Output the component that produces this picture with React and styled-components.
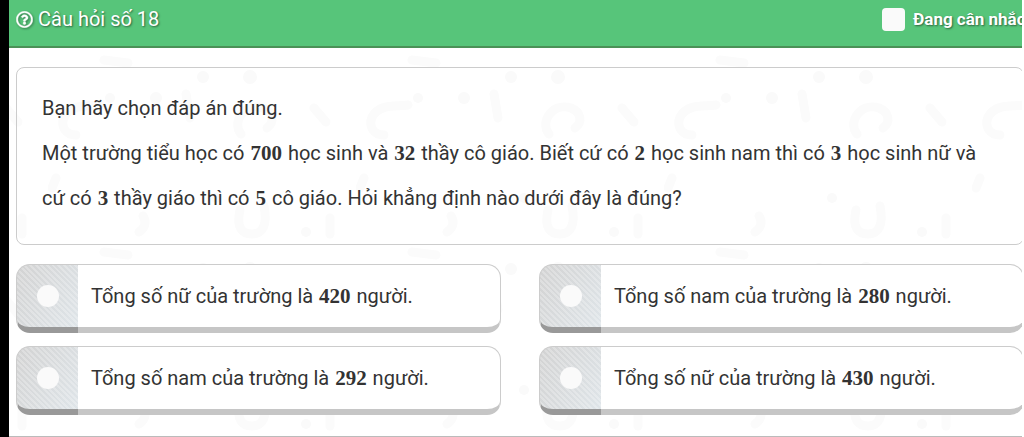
import React, { useState } from 'react'
import styled, { createGlobalStyle } from 'styled-components'
import { FaRegQuestionCircle } from 'react-icons/fa'

const answers = [
  { id: 'a', before: 'Tổng số nữ của trường là', value: 420 },
  { id: 'b', before: 'Tổng số nam của trường là', value: 280 },
  { id: 'c', before: 'Tổng số nam của trường là', value: 292 },
  { id: 'd', before: 'Tổng số nữ của trường là', value: 430 },
]

// faint question marks and commas behind the page
const Doodles = () => (
  <Backdrop aria-hidden="true">
    <defs>
      <pattern id="doodles" x="39" y="4" width="308" height="192" patternUnits="userSpaceOnUse">
        <g fill="none" stroke="#fbfbfb" strokeWidth="9" strokeLinecap="round">
          <path d="M52 53c-12 2-28-2-36 12-4 10 2 18 12 18" />
          <path d="M138 42l4 24" />
          <path d="M193 82c-10-12 4-32 22-26 10 4 12 14 4 20" />
          <path d="M266 56l12 14" />
          <path d="M192 158c-4 18 2 24 12 24s16-8 12-28" />
          <path d="M95 164c4 6 2 12-4 16" />
          <path d="M282 166v16" />
          <path d="M56 8l24 3" />
          <path d="M8 126l-4 10" />
        </g>
        <g fill="#fafafa">
          <circle cx="155" cy="25" r="6" />
          <circle cx="202" cy="25" r="7" />
          <circle cx="62" cy="46" r="5" />
          <circle cx="108" cy="46" r="6" />
          <circle cx="258" cy="180" r="5" />
          <circle cx="168" cy="146" r="5" />
        </g>
      </pattern>
    </defs>
    <rect width="100%" height="100%" fill="url(#doodles)" />
  </Backdrop>
)

const App = () => {
  const [picked, setPicked] = useState('')

  return (
    <>
      <GlobalStyle />
      <Page>
        <Header>
          <Title>
            <FaRegQuestionCircle />
            Câu hỏi số 18
          </Title>
          <Consider>
            <CheckBox type="checkbox" name="consider" />
            Đang cân nhắc
          </Consider>
        </Header>

        <Content>
          <Doodles />
          <Question>
            <p>Bạn hãy chọn đáp án đúng.</p>
            <p>
              Một trường tiểu học có <Num>700</Num> học sinh và <Num>32</Num> thầy cô giáo. Biết cứ có <Num>2</Num> học sinh nam thì có <Num>3</Num> học sinh nữ và cứ có <Num>3</Num> thầy giáo thì có <Num>5</Num> cô giáo. Hỏi khẳng định nào dưới đây là đúng?
            </p>
          </Question>

          <Answers>
            {answers.map((answer) => (
              <Answer key={answer.id}>
                <Picker>
                  <Radio
                    type="radio"
                    name="answer"
                    value={answer.id}
                    checked={picked === answer.id}
                    onChange={() => setPicked(answer.id)}
                  />
                </Picker>
                <AnswerText>
                  <span>{answer.before} <Num>{answer.value}</Num> người.</span>
                </AnswerText>
              </Answer>
            ))}
          </Answers>
        </Content>
      </Page>
    </>
  )
}

const GlobalStyle = createGlobalStyle`
  * {
    box-sizing: border-box;
  }
  body {
    margin: 0;
    background: #fff;
    color: #333;
    font-family: Roboto, "Liberation Sans", sans-serif;
    font-size: 20px;
  }
  p {
    margin: 0;
  }
`

const Page = styled.main`
  border-left: 9px solid #000;
  border-right: 2px solid #fff;
  overflow: hidden;
`

const Header = styled.header`
  display: flex;
  justify-content: space-between;
  height: 48px;
  padding: 7px 0 0 7px;
  background: #57c57a;
  border-bottom: 2px solid #4b9157;
  color: #fff;
  text-shadow: 1px 1px 2px rgba(0, 0, 0, 0.5);
  white-space: nowrap;
`

const Title = styled.h1`
  display: flex;
  align-items: center;
  gap: 5px;
  height: 24px;
  margin: 0;
  font-size: 20px;
  font-weight: 400;
  svg {
    width: 17px;
    height: 17px;
    stroke: #fff;
    stroke-width: 12px;
    filter: drop-shadow(1px 1px 1px rgba(0, 0, 0, 0.4));
  }
`

const Consider = styled.label`
  display: flex;
  align-items: center;
  gap: 8px;
  width: 140px;
  height: 24px;
  font-size: 17px;
  font-weight: 700;
`

const CheckBox = styled.input`
  appearance: none;
  flex: none;
  width: 23px;
  height: 23px;
  margin: 0;
  border-radius: 4px;
  background: #fafafa;
  &:checked {
    box-shadow: inset 0 0 0 6px #fafafa;
    background: #4b9157;
  }
`

const Content = styled.section`
  position: relative;
  margin-right: -2px;
  padding: 19px 0 21px 7px;
  border-bottom: 1px solid #bbb;
`

const Backdrop = styled.svg`
  position: absolute;
  inset: 0;
  z-index: -1;
  width: 100%;
  height: 100%;
`

const Question = styled.div`
  padding: 18px 32px 23px 25px;
  border: 1px solid #ccc;
  border-radius: 8px;
  line-height: 45px;
`

const Num = styled.span`
  margin: 0 1px;
  font-family: "Liberation Serif", serif;
  font-size: 21px;
  font-weight: 700;
  line-height: 1;
`

const Answers = styled.div`
  display: grid;
  grid-template-columns: 1fr 1fr;
  gap: 13px 38px;
  margin-top: 19px;
`

const Answer = styled.label`
  display: flex;
  height: 69px;
  cursor: pointer;
`

const Picker = styled.span`
  display: flex;
  flex: none;
  align-items: center;
  justify-content: center;
  width: 62px;
  border: 1px solid #ccc;
  border-right: none;
  border-bottom: 6px solid #999;
  border-radius: 14px 0 0 14px;
  background:
    repeating-linear-gradient(45deg, rgba(255, 255, 255, 0.25) 0 2px, transparent 2px 4px),
    linear-gradient(120deg, #d2d2d2, #dfe5e9);
`

const Radio = styled.input`
  appearance: none;
  width: 22px;
  height: 22px;
  margin: 0;
  border-radius: 50%;
  background: #fafafa;
  &:checked {
    border: 6px solid #57c57a;
  }
`

const AnswerText = styled.span`
  display: flex;
  flex: 1;
  align-items: center;
  padding-left: 13px;
  border: 1px solid #ccc;
  border-left: none;
  border-bottom: 6px solid #c6c6c6;
  border-radius: 0 14px 14px 0;
  background: #fff;
`

export default App
